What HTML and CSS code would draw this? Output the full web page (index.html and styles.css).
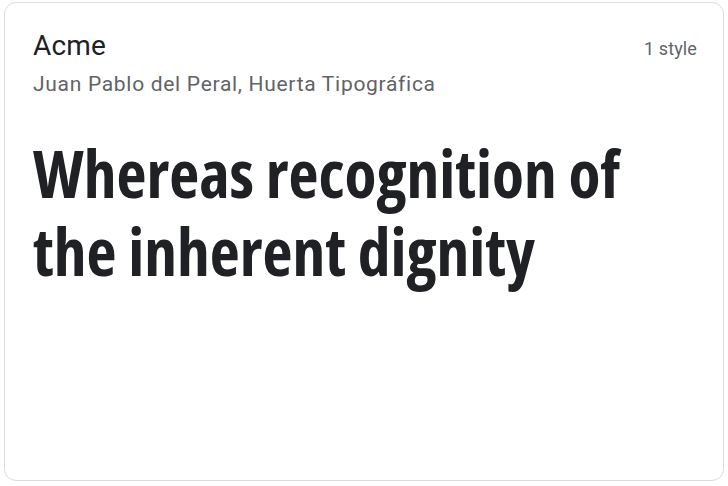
FILE: index.html
```html
<!DOCTYPE html>
<html lang="en">
<head>
<meta charset="utf-8">
<title>Acme</title>
<link rel="stylesheet" href="styles.css">
</head>
<body>
<div class="card">
  <div class="head">
    <div class="name">Acme</div>
    <div class="styles">1 style</div>
  </div>
  <div class="author">Juan Pablo del Peral, Huerta Tipográfica</div>
  <div class="sample">Whereas recognition of the inherent dignity</div>
</div>
</body>
</html>
```
FILE: styles.css
```css
html, body { background: #ffffff; }
body { margin: 2px 4px 0 4px; font-family: Roboto, "Liberation Sans", sans-serif; }
.card {
  box-sizing: border-box;
  width: 720px;
  height: 479px;
  border: 1px solid #dadce0;
  border-radius: 12px;
  padding: 25px 26px 0 28px;
  overflow: hidden;
}
.head {
  display: flex;
  justify-content: space-between;
  align-items: baseline;
}
.name {
  font-size: 28px;
  line-height: 36px;
  color: #202124;
  letter-spacing: 0.2px;
}
.styles {
  font-size: 18px;
  line-height: 24px;
  color: #5f6368;
  letter-spacing: 0.1px;
}
.author {
  margin-top: 6px;
  font-size: 21px;
  line-height: 28px;
  color: #5f6368;
  letter-spacing: 0.7px;
}
.sample {
  margin-top: 36px;
  font-family: "Open Sans", sans-serif;
  font-stretch: condensed;
  font-weight: 700;
  font-size: 65.5px;
  line-height: 78px;
  color: #202124;
}
```
